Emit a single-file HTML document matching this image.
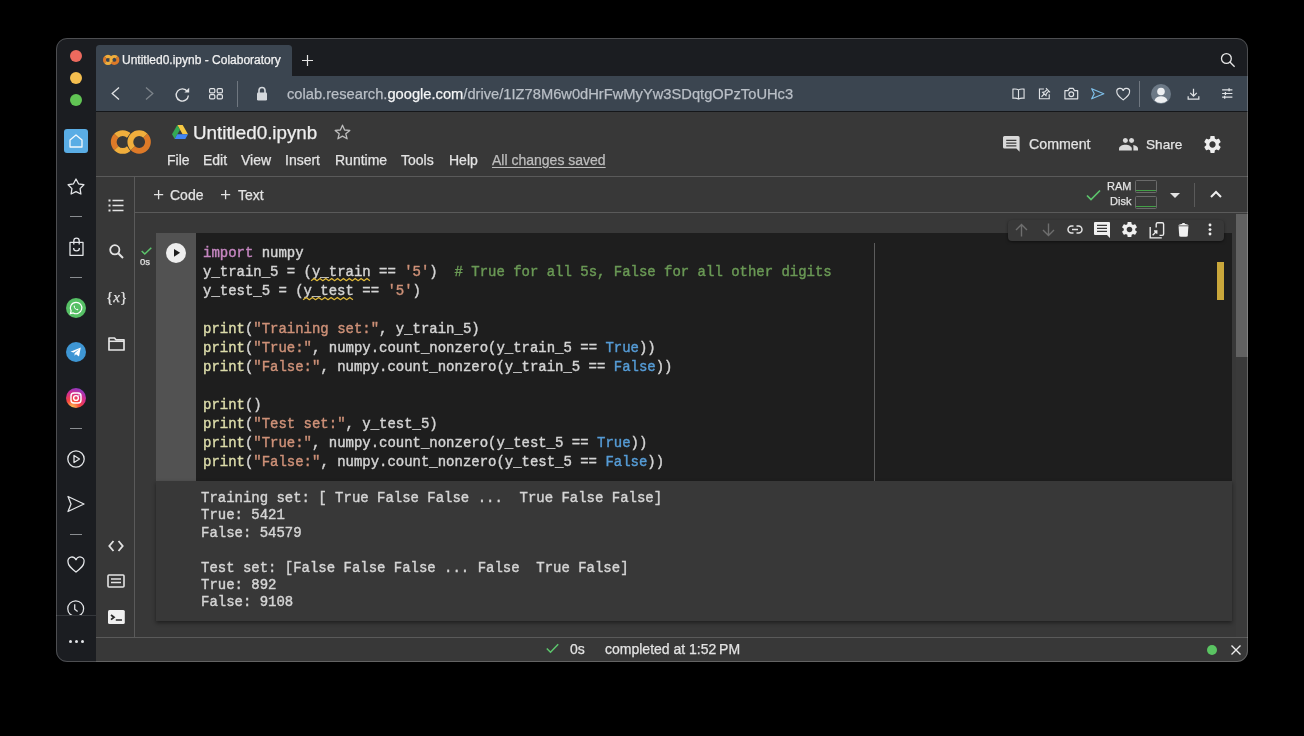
<!DOCTYPE html>
<html><head><meta charset="utf-8">
<style>
*{box-sizing:border-box;margin:0;padding:0}
html,body{width:1304px;height:736px;background:#000;overflow:hidden;font-family:"Liberation Sans",sans-serif}
.win{position:absolute;left:56px;top:38px;width:1192px;height:624px;border-radius:11px;overflow:hidden;background:#1b1d21}
.frame{position:absolute;left:56px;top:38px;width:1192px;height:624px;border-radius:11px;border:1px solid rgba(255,255,255,0.22);pointer-events:none}
.in{position:absolute;left:-56px;top:-38px;width:1304px;height:736px}
.a{position:absolute;white-space:pre;will-change:transform;-webkit-text-stroke:0.25px currentColor}
.mono{font-family:"Liberation Mono",monospace}
svg{position:absolute;overflow:visible}
.code{position:absolute;left:202.5px;top:244px;-webkit-text-stroke:0.4px currentColor;font-family:"Liberation Mono",monospace;font-size:13.97px;line-height:19px;color:#d4d4d4;white-space:pre;will-change:transform}
.k{color:#c586c0}.s{color:#ce9178}.f{color:#dcdcaa}.b{color:#569cd6}.c{color:#6a9955}
.sq{}
.out{position:absolute;left:201px;top:490.3px;-webkit-text-stroke:0.4px currentColor;font-family:"Liberation Mono",monospace;font-size:13.97px;line-height:17.37px;color:#d5d5d5;white-space:pre;will-change:transform}
</style></head><body>
<div class="win"><div class="in">
  <!-- traffic lights -->
  <div class="a" style="left:70px;top:50px;width:12px;height:12px;border-radius:50%;background:#ec6a5e"></div>
  <div class="a" style="left:70px;top:72px;width:12px;height:12px;border-radius:50%;background:#f4be4f"></div>
  <div class="a" style="left:70px;top:94px;width:12px;height:12px;border-radius:50%;background:#61c454"></div>
  <!-- tab strip -->
  <div class="a" style="left:96px;top:45px;width:196px;height:32px;background:#3b4550;border-radius:3.5px 3.5px 0 0"></div>
  <svg style="left:102.8px;top:55.2px" width="16.3" height="9.8" viewBox="0 0 40 24">
    <g fill="none" stroke-width="7.5">
      <path d="M18.3 6A8.3 8.3 0 0 0 6.2 6" stroke="#f0ae3c"/>
      <path d="M6.2 6A8.3 8.3 0 0 0 6.2 18" stroke="#de7a28"/>
      <path d="M6.2 18A8.3 8.3 0 0 0 18.3 18" stroke="#f0ae3c"/>
      <path d="M33.9 6A8.3 8.3 0 0 0 21.9 18" stroke="#f0ae3c"/>
      <path d="M21.9 18A8.3 8.3 0 0 0 33.9 6" stroke="#de7a28"/>
    </g></svg>
  <div class="a" style="left:122px;top:53px;font-size:12px;line-height:15px;color:#f2f2f2">Untitled0.ipynb - Colaboratory</div>
  <svg style="left:302px;top:54.7px" width="11" height="11" viewBox="0 0 11 11"><path d="M5.5 0V11M0 5.5H11" stroke="#e6e6e6" stroke-width="1.2"/></svg>
  <svg style="left:1220px;top:52px" width="15" height="15" viewBox="0 0 15 15"><circle cx="6.4" cy="6.5" r="4.9" fill="none" stroke="#e6e6e6" stroke-width="1.3"/><path d="M9.9 10L14.6 14.7" stroke="#e6e6e6" stroke-width="1.3"/></svg>
  <!-- toolbar -->
  <div class="a" style="left:96px;top:76px;width:1152px;height:35px;background:#3b4550"></div>
  <div class="a" style="left:96px;top:111px;width:1152px;height:1px;background:#15171a"></div>
  <svg style="left:111px;top:87px" width="9" height="13" viewBox="0 0 9 13"><path d="M8 0.5L1.2 6.5L8 12.5" fill="none" stroke="#e2e4e6" stroke-width="1.3"/></svg>
  <svg style="left:145px;top:87px" width="9" height="13" viewBox="0 0 9 13"><path d="M1 0.5L7.8 6.5L1 12.5" fill="none" stroke="#7d848b" stroke-width="1.3"/></svg>
  <svg style="left:175px;top:87px" width="15" height="15" viewBox="0 0 15 15"><path d="M12.4 4.6A6.1 6.1 0 1 0 13.4 8.5" fill="none" stroke="#e2e4e6" stroke-width="1.4"/><path d="M14.2 0.8V5.6H9.4Z" fill="#e2e4e6"/></svg>
  <svg style="left:208.5px;top:87.7px" width="14" height="12" viewBox="0 0 14 12"><g fill="none" stroke="#e2e4e6" stroke-width="1.2"><rect x="0.6" y="0.6" width="5.2" height="4.3" rx="1.2"/><rect x="8.2" y="0.6" width="5.2" height="4.3" rx="1.2"/><rect x="0.6" y="6.6" width="5.2" height="4.3" rx="1.2"/><rect x="8.2" y="6.6" width="5.2" height="4.3" rx="1.2"/></g></svg>
  <div class="a" style="left:237px;top:81px;width:1px;height:26px;background:#6f7780"></div>
  <svg style="left:256px;top:86px" width="12" height="15" viewBox="0 0 12 15"><path d="M3 7V4.5A3 3 0 0 1 9 4.5V7" fill="none" stroke="#d4d8dc" stroke-width="1.6"/><rect x="1" y="6.5" width="10" height="8" rx="1.3" fill="#d4d8dc"/></svg>
  <div class="a" style="left:287px;top:86px;font-size:14.7px;line-height:17px;color:#b9bfc6">colab.research.<span style="color:#f4f5f6">google.com</span>/drive/1IZ78M6w0dHrFwMyYw3SDqtgOPzToUHc3</div>
  <!-- right toolbar icons -->
  <svg style="left:1012px;top:88px" width="13" height="12" viewBox="0 0 15 14"><path d="M7.5 2.2C6 1.2 3 1 1 1.3V12C3 11.7 6 12 7.5 13C9 12 12 11.7 14 12V1.3C12 1 9 1.2 7.5 2.2Z M7.5 2.2V13" fill="none" stroke="#dfe2e5" stroke-width="1.3"/></svg>
  <svg style="left:1038.3px;top:87px" width="13.5" height="13" viewBox="0 0 16 16"><path d="M7 2.5H1.5V14.5H13.5V9" fill="none" stroke="#dfe2e5" stroke-width="1.4"/><path d="M9.5 1.5L14.5 6.5M11 3L8 6L5.5 6.5L9.5 10.5L10 8L13 5M7.5 8.5L4 12" fill="none" stroke="#dfe2e5" stroke-width="1.4"/></svg>
  <svg style="left:1063.6px;top:87px" width="14.6" height="12.8" viewBox="0 0 16 14"><path d="M1 4H4.5L6 1.5H10L11.5 4H15V13H1Z" fill="none" stroke="#dfe2e5" stroke-width="1.3" stroke-linejoin="round"/><circle cx="8" cy="8" r="2.6" fill="none" stroke="#dfe2e5" stroke-width="1.3"/></svg>
  <svg style="left:1091px;top:88.3px" width="13.5" height="11.5" viewBox="0 0 13.5 11.5"><path d="M0.7 0.7L12.8 5.75L0.7 10.8L3.2 5.75Z" fill="none" stroke="#7fc0ea" stroke-width="1.2" stroke-linejoin="round"/></svg>
  <svg style="left:1116px;top:88px" width="14.4" height="13" viewBox="0 0 16 14"><path d="M8 13C4 10 1 7.5 1 4.5A3.5 3.5 0 0 1 8 3A3.5 3.5 0 0 1 15 4.5C15 7.5 12 10 8 13Z" fill="none" stroke="#dfe2e5" stroke-width="1.3"/></svg>
  <div class="a" style="left:1139px;top:81px;width:1px;height:26px;background:#6f7780"></div>
  <svg style="left:1151px;top:84px" width="20" height="20" viewBox="0 0 20 20"><circle cx="10" cy="10" r="10" fill="#6c7986"/><circle cx="10" cy="7.5" r="3.8" fill="#eef0f2"/><path d="M3.5 16.5C4.5 13.3 7 12.2 10 12.2S15.5 13.3 16.5 16.5A9.5 9.5 0 0 1 3.5 16.5Z" fill="#eef0f2"/></svg>
  <svg style="left:1187px;top:87.5px" width="13" height="12.3" viewBox="0 0 15 15"><path d="M7.5 1V10M3.5 6L7.5 10L11.5 6M1 10V13.5H14V10" fill="none" stroke="#dfe2e5" stroke-width="1.5"/></svg>
  <svg style="left:1220.5px;top:88px" width="12.5" height="11" viewBox="0 0 16 15"><path d="M1 2.5H15M1 7.5H15M1 12.5H15" stroke="#dfe2e5" stroke-width="1.5"/><path d="M10.5 0.5V4.5M5.5 5.5V9.5M4.5 10.5V14.5" stroke="#dfe2e5" stroke-width="1.8"/></svg>
  <!-- sidebar -->
  <div class="a" style="left:64px;top:129px;width:24px;height:24px;border-radius:3px;background:#5aade5"></div>
  <svg style="left:68px;top:133px" width="16" height="16" viewBox="0 0 16 16"><path d="M2 7L8 2L14 7V14H2Z" fill="none" stroke="#f2f8fc" stroke-width="1.3" stroke-linejoin="round"/></svg>
  <svg style="left:67px;top:177.5px" width="18" height="18" viewBox="0 0 18 18"><path d="M9.00 1.00L11.53 5.82L16.89 6.74L13.09 10.63L13.88 16.01L9.00 13.60L4.12 16.01L4.91 10.63L1.11 6.74L6.47 5.82Z" fill="none" stroke="#e3e5e8" stroke-width="1.3" stroke-linejoin="round"/></svg>
  <div class="a" style="left:70px;top:216px;width:12px;height:1px;background:#8a8d91"></div>
  <svg style="left:68.5px;top:236.5px" width="15" height="19" viewBox="0 0 15 19"><path d="M1 5.3H14V18.3H1Z" fill="none" stroke="#e3e5e8" stroke-width="1.3" stroke-linejoin="round"/><path d="M4.8 7.5V3.8A2.7 2.7 0 0 1 10.2 3.8V7.5M4.6 11A2.9 2.9 0 0 0 10.4 11" fill="none" stroke="#e3e5e8" stroke-width="1.3"/></svg>
  <div class="a" style="left:70px;top:277px;width:12px;height:1px;background:#8a8d91"></div>
  <svg style="left:66px;top:298px" width="20" height="20" viewBox="0 0 20 20"><circle cx="10" cy="10" r="10" fill="#56c065"/><path d="M10 4.3A5.7 5.7 0 0 0 5.1 12.9L4.4 15.6L7.2 14.9A5.7 5.7 0 1 0 10 4.3Z" fill="none" stroke="#fff" stroke-width="1.2"/><path d="M7.8 7.8C8 7.5 8.4 7.5 8.6 7.8L9 8.7L8.6 9.3C9 10.1 9.7 10.8 10.6 11.2L11.2 10.8L12.2 11.3C12.4 11.6 12.3 12 12 12.2C10.5 12.8 7.2 9.8 7.8 7.8Z" fill="#fff"/></svg>
  <svg style="left:66px;top:342px" width="20" height="20" viewBox="0 0 20 20"><circle cx="10" cy="10" r="10" fill="#3e96d4"/><path d="M4.5 9.7L14.8 5.5L13 14.5L10 12.2L8.5 13.8L8.6 11.2L13 7.2L7.7 10.6Z" fill="#fff"/></svg>
  <svg style="left:66px;top:387.6px" width="20" height="20" viewBox="0 0 20 20"><defs><radialGradient id="ig" cx="0.3" cy="1" r="1.1"><stop offset="0" stop-color="#fdd35a"/><stop offset="0.35" stop-color="#f8463b"/><stop offset="0.7" stop-color="#d12d92"/><stop offset="1" stop-color="#7b3ed1"/></radialGradient></defs><circle cx="10" cy="10" r="10" fill="url(#ig)"/><rect x="5" y="5" width="10" height="10" rx="3" fill="none" stroke="#fff" stroke-width="1.4"/><circle cx="10" cy="10" r="2.4" fill="none" stroke="#fff" stroke-width="1.4"/><circle cx="12.9" cy="7.1" r="0.7" fill="#fff"/></svg>
  <div class="a" style="left:70px;top:428px;width:12px;height:1px;background:#8a8d91"></div>
  <svg style="left:67px;top:449.5px" width="18" height="18" viewBox="0 0 18 18"><circle cx="9" cy="9" r="8.2" fill="none" stroke="#e3e5e8" stroke-width="1.3"/><path d="M7 5.5L12.5 9L7 12.5Z" fill="none" stroke="#e3e5e8" stroke-width="1.3" stroke-linejoin="round"/></svg>
  <svg style="left:67px;top:495px" width="18" height="18" viewBox="0 0 18 18"><path d="M1 1.5L17 9L1 16.5L4 9Z" fill="none" stroke="#e3e5e8" stroke-width="1.3" stroke-linejoin="round"/></svg>
  <div class="a" style="left:70px;top:534px;width:12px;height:1px;background:#8a8d91"></div>
  <svg style="left:67px;top:557px" width="18" height="16" viewBox="0 0 18 16"><path d="M9 15C4.5 11.5 1 8.8 1 5A4 4 0 0 1 9 3.2A4 4 0 0 1 17 5C17 8.8 13.5 11.5 9 15Z" fill="none" stroke="#e3e5e8" stroke-width="1.3"/></svg>
  <svg style="left:67.3px;top:600.3px" width="17.4" height="17.4" viewBox="0 0 18 18"><circle cx="9" cy="9" r="8.2" fill="none" stroke="#e3e5e8" stroke-width="1.3"/><path d="M8 4.5V9.5L11 12" fill="none" stroke="#e3e5e8" stroke-width="1.3"/></svg>
  <div class="a" style="left:56px;top:615px;width:40px;height:47px;background:#1b1d21;border-top:1px solid #34373b"></div>
  <div class="a" style="left:68.9px;top:640.3px;width:3.4px;height:3.4px;border-radius:50%;background:#e3e5e8"></div>
  <div class="a" style="left:74.9px;top:640.3px;width:3.4px;height:3.4px;border-radius:50%;background:#e3e5e8"></div>
  <div class="a" style="left:80.9px;top:640.3px;width:3.4px;height:3.4px;border-radius:50%;background:#e3e5e8"></div>

  <!-- colab -->
  <div class="a" style="left:96px;top:112px;width:1152px;height:550px;background:#383838"></div>
  <div class="a" style="left:96px;top:176px;width:1152px;height:1px;background:#5a5a5a"></div>
  <div class="a" style="left:134px;top:212px;width:1114px;height:1px;background:#5a5a5a"></div>
  <div class="a" style="left:134px;top:176px;width:1px;height:461px;background:#5a5a5a"></div>
  <div class="a" style="left:96px;top:637px;width:1152px;height:1px;background:#5a5a5a"></div>
  <!-- logo -->
  <svg style="left:110px;top:130px" width="42" height="24" viewBox="0 0 42 24">
    <g fill="none" stroke-width="5.8">
      <path d="M19.1 5.8A8.8 8.8 0 0 0 6.3 5.8" stroke="#f0ae3c"/>
      <path d="M6.3 5.8A8.8 8.8 0 0 0 6.3 18.2" stroke="#de7a28"/>
      <path d="M6.3 18.2A8.8 8.8 0 0 0 19.1 18.2" stroke="#f0ae3c"/>
      <circle cx="29.2" cy="12" r="8.8" stroke="#383838" stroke-width="7.4"/>
      <path d="M35.4 5.8A8.8 8.8 0 0 0 22.9 18.2" stroke="#f0ae3c"/>
      <path d="M22.9 18.2A8.8 8.8 0 0 0 35.4 5.8" stroke="#de7a28"/>
    </g>
  </svg>
  <svg style="left:172px;top:125px" width="16" height="14" viewBox="0 0 16 14"><path d="M5.3 0H10.7L16 9.3H10.6Z" fill="#f6c843"/><path d="M5.3 0L8 4.7L2.7 14L0 9.3Z" fill="#34a853"/><path d="M2.7 14L5.3 9.3H16L13.3 14Z" fill="#4285f4"/></svg>
  <div class="a" style="left:193px;top:121.7px;font-size:18.8px;line-height:22px;color:#eeeeee">Untitled0.ipynb</div>
  <svg style="left:334px;top:124px" width="17" height="16" viewBox="0 0 17 16"><path d="M8.5 1.2L10.6 6L15.8 6.4L11.8 9.8L13.1 14.8L8.5 12.1L3.9 14.8L5.2 9.8L1.2 6.4L6.4 6Z" fill="none" stroke="#bdbdbd" stroke-width="1.3" stroke-linejoin="round"/></svg>
  <div class="a" style="left:167px;top:152px;font-size:14px;line-height:17px;color:#e3e3e3">File</div>
  <div class="a" style="left:203px;top:152px;font-size:14px;line-height:17px;color:#e3e3e3">Edit</div>
  <div class="a" style="left:241px;top:152px;font-size:14px;line-height:17px;color:#e3e3e3">View</div>
  <div class="a" style="left:285px;top:152px;font-size:14px;line-height:17px;color:#e3e3e3">Insert</div>
  <div class="a" style="left:335px;top:152px;font-size:14px;line-height:17px;color:#e3e3e3">Runtime</div>
  <div class="a" style="left:401px;top:152px;font-size:14px;line-height:17px;color:#e3e3e3">Tools</div>
  <div class="a" style="left:449px;top:152px;font-size:14px;line-height:17px;color:#e3e3e3">Help</div>
  <div class="a" style="left:492px;top:152px;font-size:14px;line-height:17px;color:#bdbdbd;text-decoration:underline;text-underline-offset:2px">All changes saved</div>
  <!-- comment/share/gear -->
  <svg style="left:1002.8px;top:135.8px" width="16.6" height="15.8" viewBox="0 0 16.6 15.8"><path d="M1.5 0H15.1A1.5 1.5 0 0 1 16.6 1.5V15.8L13.4 12.6H1.5A1.5 1.5 0 0 1 0 11.1V1.5A1.5 1.5 0 0 1 1.5 0Z" fill="#d9d9d9"/><path d="M3.2 4.4H13.4M3.2 7.1H13.4M3.2 9.8H13.4" stroke="#3a3a3a" stroke-width="1.2"/></svg>
  <div class="a" style="left:1029px;top:136px;font-size:14.2px;line-height:17px;color:#e3e3e3">Comment</div>
  <svg style="left:1118.7px;top:137.8px" width="19" height="12.4" viewBox="0 0 19 12.4"><circle cx="6.4" cy="2.6" r="2.5" fill="#d9d9d9"/><circle cx="12.6" cy="2.6" r="2.5" fill="#d9d9d9"/><path d="M0 12.4V10.6C0 8.4 3.3 6.8 6.4 6.8S12.8 8.4 12.8 10.6V12.4Z" fill="#d9d9d9"/><path d="M14.2 7C16.8 7.3 19 8.6 19 10.6V12.4H14.4V10.6C14.4 9.2 14.5 8 14.2 7Z" fill="#d9d9d9"/></svg>
  <div class="a" style="left:1146px;top:136px;font-size:13.6px;line-height:17px;color:#e3e3e3">Share</div>
  <svg style="left:1201.5px;top:133.5px" width="21" height="21" viewBox="0 0 24 24"><path fill="#eeeeee" d="M19.14 12.94c.04-.3.06-.61.06-.94 0-.32-.02-.64-.07-.94l2.03-1.58c.18-.14.23-.41.12-.61l-1.92-3.32c-.12-.22-.37-.29-.59-.22l-2.39.96c-.5-.38-1.03-.7-1.62-.94l-.36-2.54c-.04-.24-.24-.41-.48-.41h-3.84c-.24 0-.43.17-.47.41l-.36 2.54c-.59.24-1.13.57-1.62.94l-2.39-.96c-.22-.08-.47 0-.59.22L2.74 8.87c-.12.21-.08.47.12.61l2.03 1.58c-.05.3-.09.63-.09.94s.02.64.07.94l-2.03 1.58c-.18.14-.23.41-.12.61l1.92 3.32c.12.22.37.29.59.22l2.39-.96c.5.38 1.03.7 1.62.94l.36 2.54c.05.24.24.41.48.41h3.84c.24 0 .44-.17.47-.41l.36-2.54c.59-.24 1.13-.56 1.62-.94l2.39.96c.22.08.47 0 .59-.22l1.92-3.32c.12-.22.07-.47-.12-.61l-2.01-1.58zM12 15.6c-1.98 0-3.6-1.62-3.6-3.6s1.62-3.6 3.6-3.6 3.6 1.62 3.6 3.6-1.62 3.6-3.6 3.6z"/></svg>
  <!-- toolbar row -->
  <svg style="left:153.7px;top:190px" width="9.2" height="9.2" viewBox="0 0 9.2 9.2"><path d="M4.6 0V9.2M0 4.6H9.2" stroke="#e3e3e3" stroke-width="1.3"/></svg>
  <div class="a" style="left:170px;top:186.5px;font-size:14px;line-height:17px;color:#e3e3e3">Code</div>
  <svg style="left:221px;top:190px" width="9.2" height="9.2" viewBox="0 0 9.2 9.2"><path d="M4.6 0V9.2M0 4.6H9.2" stroke="#e3e3e3" stroke-width="1.3"/></svg>
  <div class="a" style="left:237.7px;top:186.5px;font-size:14px;line-height:17px;color:#e3e3e3">Text</div>
  <svg style="left:1086px;top:189px" width="15" height="12" viewBox="0 0 15 12"><path d="M1 6.5L5 10.5L14 1.5" fill="none" stroke="#5cc46c" stroke-width="1.7"/></svg>
  <div class="a" style="left:1107px;top:180px;font-size:11px;line-height:13px;color:#e3e3e3">RAM</div>
  <div class="a" style="left:1110px;top:195px;font-size:11px;line-height:13px;color:#e3e3e3">Disk</div>
  <div class="a" style="left:1135px;top:180.3px;width:22px;height:12.5px;border:1px solid #6a6a6a;border-radius:1.5px"></div>
  <div class="a" style="left:1136px;top:190px;width:20px;height:1px;background:#43a047"></div>
  <div class="a" style="left:1135px;top:196.1px;width:22px;height:12.7px;border:1px solid #6a6a6a;border-radius:1.5px"></div>
  <div class="a" style="left:1136px;top:205.5px;width:20px;height:1px;background:#43a047"></div>
  <svg style="left:1170px;top:192.7px" width="10" height="5" viewBox="0 0 10 5"><path d="M0 0H10L5 5Z" fill="#e3e3e3"/></svg>
  <div class="a" style="left:1194px;top:183px;width:1px;height:24px;background:#5a5a5a"></div>
  <svg style="left:1210px;top:190px" width="12" height="8" viewBox="0 0 12 8"><path d="M1 7L6 2L11 7" fill="none" stroke="#eeeeee" stroke-width="2"/></svg>
  <!-- left colab column icons -->
  <svg style="left:108px;top:199px" width="16" height="13" viewBox="0 0 16 13"><path d="M0.5 1.5H2.5M0.5 6.5H2.5M0.5 11.5H2.5" stroke="#e3e3e3" stroke-width="2"/><path d="M4.5 1.5H15.5M4.5 6.5H15.5M4.5 11.5H15.5" stroke="#e3e3e3" stroke-width="1.7"/></svg>
  <svg style="left:109px;top:244px" width="15" height="15" viewBox="0 0 15 15"><circle cx="5.8" cy="5.8" r="4.6" fill="none" stroke="#e3e3e3" stroke-width="1.8"/><path d="M9.2 9.2L14 14" stroke="#e3e3e3" stroke-width="2"/></svg>
  <div class="a" style="left:106px;top:288px;font-family:'Liberation Serif',serif;font-size:15px;line-height:18px;color:#e3e3e3">{<i>x</i>}</div>
  <svg style="left:108px;top:337px" width="17" height="14" viewBox="0 0 17 14"><path d="M1 1H6.5L8 2.8H16V13H1Z" fill="none" stroke="#e3e3e3" stroke-width="1.7" stroke-linejoin="round"/><path d="M1 4.3H16" stroke="#e3e3e3" stroke-width="1.5"/></svg>
  <svg style="left:108px;top:540px" width="16" height="12" viewBox="0 0 16 12"><path d="M5.5 1L1.3 6L5.5 11M10.5 1L14.7 6L10.5 11" fill="none" stroke="#e3e3e3" stroke-width="1.8"/></svg>
  <svg style="left:107px;top:574px" width="18" height="14" viewBox="0 0 18 14"><rect x="1" y="1" width="16" height="12" rx="1" fill="none" stroke="#e3e3e3" stroke-width="1.6"/><path d="M4 5H14M4 8.5H14" stroke="#e3e3e3" stroke-width="1.5"/></svg>
  <svg style="left:108.2px;top:609.6px" width="16.8" height="14" viewBox="0 0 16.8 14"><rect x="0" y="0" width="16.8" height="14" rx="1.5" fill="#f0f0f0"/><path d="M3 5L6 7.3L3 9.6" fill="none" stroke="#2a2a2a" stroke-width="1.8"/><path d="M7.8 10H14" stroke="#2a2a2a" stroke-width="1.5"/></svg>

  <!-- cell -->
  <div class="a" style="left:156px;top:233px;width:40px;height:248px;background:#525252"></div>
  <div class="a" style="left:196px;top:233px;width:1036px;height:248px;background:#1e1e1e"></div>
  <svg style="left:141px;top:247px" width="11" height="8" viewBox="0 0 11 8"><path d="M0.7 4L3.8 7L10.3 0.7" fill="none" stroke="#5cc46c" stroke-width="1.5"/></svg>
  <div class="a" style="left:140px;top:256px;font-size:9.5px;line-height:11px;color:#e3e3e3">0s</div>
  <div class="a" style="left:166px;top:243px;width:20px;height:20px;border-radius:50%;background:#eeeeee"></div>
  <svg style="left:173.7px;top:249.1px" width="6.1" height="7.7" viewBox="0 0 6.1 7.7"><path d="M0 0L6.1 3.85L0 7.7Z" fill="#1e1e1e"/></svg>
  <div class="a" style="left:874px;top:243px;width:1px;height:238px;background:#5c5c5c"></div>
  <div class="code"><span class="k">import</span> numpy
y_train_5 = (<span class="sq">y_train</span> == <span class="s">'5'</span>)  <span class="c"># True for all 5s, False for all other digits</span>
y_test_5 = (<span class="sq">y_test</span> == <span class="s">'5'</span>)

<span class="f">print</span>(<span class="s">"Training set:"</span>, y_train_5)
<span class="f">print</span>(<span class="s">"True:"</span>, numpy.count_nonzero(y_train_5 == <span class="b">True</span>))
<span class="f">print</span>(<span class="s">"False:"</span>, numpy.count_nonzero(y_train_5 == <span class="b">False</span>))

<span class="f">print</span>()
<span class="f">print</span>(<span class="s">"Test set:"</span>, y_test_5)
<span class="f">print</span>(<span class="s">"True:"</span>, numpy.count_nonzero(y_test_5 == <span class="b">True</span>))
<span class="f">print</span>(<span class="s">"False:"</span>, numpy.count_nonzero(y_test_5 == <span class="b">False</span>))</div>
  <svg style="left:311.0px;top:277.8px" width="59.0" height="3.2" viewBox="0 0 59.0 3.2"><path d="M0 2.7L2.950 0.5L5.900 2.7L8.850 0.5L11.800 2.7L14.750 0.5L17.700 2.7L20.650 0.5L23.600 2.7L26.550 0.5L29.500 2.7L32.450 0.5L35.400 2.7L38.350 0.5L41.300 2.7L44.250 0.5L47.200 2.7L50.150 0.5L53.100 2.7L56.050 0.5L59.000 2.7" fill="none" stroke="#dfb93a" stroke-width="1.25" stroke-linejoin="round"/></svg>
  <svg style="left:303.0px;top:296.8px" width="50.0" height="3.2" viewBox="0 0 50.0 3.2"><path d="M0 2.7L3.125 0.5L6.250 2.7L9.375 0.5L12.500 2.7L15.625 0.5L18.750 2.7L21.875 0.5L25.000 2.7L28.125 0.5L31.250 2.7L34.375 0.5L37.500 2.7L40.625 0.5L43.750 2.7L46.875 0.5L50.000 2.7" fill="none" stroke="#dfb93a" stroke-width="1.25" stroke-linejoin="round"/></svg>
  <div class="a" style="left:1217px;top:262px;width:7px;height:38px;background:#c9a73b"></div>
  <!-- cell toolbar -->
  <div class="a" style="left:1008px;top:220px;width:216px;height:21px;background:#383838;border-radius:4px;box-shadow:0 1px 3px rgba(0,0,0,0.5)"></div>
  <svg style="left:1015px;top:223px" width="13" height="14" viewBox="0 0 13 14"><path d="M6.5 13.5V1.5M1 7L6.5 1.5L12 7" fill="none" stroke="#6e6e6e" stroke-width="1.4"/></svg>
  <svg style="left:1042px;top:223px" width="13" height="14" viewBox="0 0 13 14"><path d="M6.5 0.5V12.5M1 7L6.5 12.5L12 7" fill="none" stroke="#6e6e6e" stroke-width="1.4"/></svg>
  <svg style="left:1067px;top:225px" width="16" height="9" viewBox="0 0 16 9"><path d="M6.5 1H4.5A3.5 3.5 0 0 0 4.5 8H6.5M9.5 1H11.5A3.5 3.5 0 0 1 11.5 8H9.5M5 4.5H11" fill="none" stroke="#e3e3e3" stroke-width="1.5"/></svg>
  <svg style="left:1094px;top:222px" width="16" height="16" viewBox="0 0 16 16"><path d="M1 0H15A1 1 0 0 1 16 1V16L13 13H1A1 1 0 0 1 0 12V1A1 1 0 0 1 1 0Z" fill="#f0f0f0"/><path d="M3 3.3H13M3 6.3H13M3 9.3H13" stroke="#383838" stroke-width="1.3"/></svg>
  <svg style="left:1119.9px;top:220.2px" width="19" height="19" viewBox="0 0 24 24"><path fill="#f0f0f0" d="M19.14 12.94c.04-.3.06-.61.06-.94 0-.32-.02-.64-.07-.94l2.03-1.58c.18-.14.23-.41.12-.61l-1.92-3.32c-.12-.22-.37-.29-.59-.22l-2.39.96c-.5-.38-1.030-.7-1.62-.94l-.36-2.54c-.04-.24-.24-.41-.48-.41h-3.84c-.24 0-.43.17-.47.41l-.36 2.54c-.59.24-1.130.57-1.62.94l-2.39-.96c-.22-.08-.47 0-.59.22L2.74 8.87c-.12.21-.08.47.12.61l2.03 1.58c-.05.3-.09.63-.09.94s.02.64.07.94l-2.03 1.580c-.18.14-.23.41-.12.61l1.92 3.32c.12.22.37.29.59.22l2.39-.96c.5.38 1.03.7 1.62.94l.36 2.54c.05.24.24.41.48.41h3.84c.24 0 .44-.17.47-.41l.36-2.54c.59-.24 1.13-.56 1.62-.94l2.39.96c.22.08.47 0 .59-.22l1.92-3.32c.12-.22.07-.47-.12-.61l-2.01-1.58zM12 15.6c-1.98 0-3.6-1.62-3.6-3.6s1.62-3.6 3.6-3.6 3.6 1.62 3.6 3.6-1.62 3.6-3.6 3.6z"/></svg>
  <svg style="left:1148.5px;top:221.5px" width="16" height="17" viewBox="0 0 16 17"><path d="M7.2 5.5V2.2A1.4 1.4 0 0 1 8.6 0.8H13.2A1.4 1.4 0 0 1 14.6 2.2V12A1.4 1.4 0 0 1 13.2 13.4H10.5" fill="none" stroke="#ececec" stroke-width="1.4"/><path d="M1.2 5V15.9H12.8" fill="none" stroke="#ececec" stroke-width="1.4"/><path d="M3.6 13.2L7.6 9.2M5 9H7.8V11.8" fill="none" stroke="#ececec" stroke-width="1.3"/></svg>
  <svg style="left:1178px;top:223px" width="11" height="14" viewBox="0 0 11 14"><path d="M0.2 2.6C0.2 1.6 2.5 0.9 5.5 0.9S10.8 1.6 10.8 2.6Z" fill="#f0f0f0"/><path d="M4 0.9C4 0.2 4.5 0 5.5 0S7 0.2 7 0.9Z" fill="#f0f0f0"/><path d="M0.6 3.3H10.4L9.8 12.6C9.7 13.4 9.3 13.8 8.3 13.8H2.7C1.7 13.8 1.3 13.4 1.2 12.6Z" fill="#f0f0f0"/></svg>
  <svg style="left:1208.4px;top:223.4px" width="4" height="13" viewBox="0 0 4 13"><circle cx="2" cy="2" r="1.45" fill="#f0f0f0"/><circle cx="2" cy="6.6" r="1.45" fill="#f0f0f0"/><circle cx="2" cy="11" r="1.45" fill="#f0f0f0"/></svg>
  <!-- scrollbar -->
  <div class="a" style="left:1236px;top:213px;width:12px;height:424px;background:#3a3a3a"></div>
  <div class="a" style="left:1236px;top:214px;width:12px;height:143px;background:#616161"></div>

  <!-- output -->
  <div class="a" style="left:156px;top:481px;width:1076px;height:140px;background:#383838;box-shadow:0 2px 4px rgba(0,0,0,0.45)"></div>
  <div class="out">Training set: [ True False False ...  True False False]
True: 5421
False: 54579

Test set: [False False False ... False  True False]
True: 892
False: 9108</div>

  <!-- status bar -->
  <svg style="left:546px;top:643px" width="13" height="11" viewBox="0 0 13 11"><path d="M0.8 5.5L4.5 9.2L12.2 1.2" fill="none" stroke="#5cc46c" stroke-width="1.6"/></svg>
  <div class="a" style="left:570px;top:641px;font-size:14px;line-height:16px;color:#e3e3e3">0s</div>
  <div class="a" style="left:605px;top:641px;font-size:14px;line-height:16px;color:#e3e3e3">completed at 1:52&#8201;PM</div>
  <div class="a" style="left:1207px;top:645px;width:10px;height:10px;border-radius:50%;background:#5ac462"></div>
  <svg style="left:1231px;top:645px" width="10" height="10" viewBox="0 0 10 10"><path d="M0.5 0.5L9.5 9.5M9.5 0.5L0.5 9.5" stroke="#eeeeee" stroke-width="1.35"/></svg>
</div></div>
<div class="frame"></div>
</body></html>
